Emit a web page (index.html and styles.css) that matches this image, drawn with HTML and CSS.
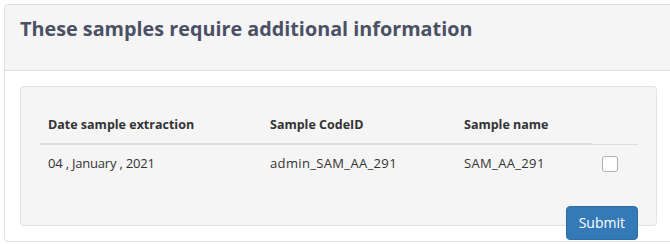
FILE: index.html
```html
<!DOCTYPE html>
<html>
<head>
<meta charset="utf-8">
<link rel="stylesheet" href="styles.css">
</head>
<body>
<div class="panel">
  <div class="panel-heading">
    <h3 class="panel-title">These samples require additional information</h3>
  </div>
  <div class="panel-body">
    <div class="well">
      <table class="table">
        <thead>
          <tr>
            <th class="c1">Date sample extraction</th>
            <th class="c2">Sample CodeID</th>
            <th class="c3">Sample name</th>
          </tr>
        </thead>
        <tbody>
          <tr>
            <td class="date">04 , January , 2021</td>
            <td class="code">admin_SAM_AA_291</td>
            <td class="code">SAM_AA_291</td>
            <td class="c4"><input type="checkbox" class="check"></td>
          </tr>
        </tbody>
      </table>
      <button class="btn">Submit</button>
    </div>
  </div>
</div>
</body>
</html>
```
FILE: styles.css
```css
html, body {
  margin: 0;
  padding: 0;
  background: #fff;
}
body {
  font-family: "Open Sans", "Liberation Sans", sans-serif;
  font-size: 13px;
  line-height: 20px;
  color: #333;
  overflow: hidden;
}
.panel {
  margin: 4px 0 0 4px;
  width: 667px;
  border: 1px solid #ddd;
  border-radius: 4px;
  background: #fff;
}
.panel-heading {
  background: #f5f5f5;
  border-bottom: 1px solid #ddd;
  border-radius: 3px 3px 0 0;
  height: 66px;
  box-sizing: border-box;
  padding: 13px 15px;
}
.panel-title {
  margin: 0;
  font-size: 19.8px;
  line-height: 22px;
  font-weight: 700;
  color: #4b5165;
}
.panel-body {
  padding: 15px;
}
.well {
  background: #f5f5f5;
  border: 1px solid #e3e3e3;
  border-radius: 4px;
  padding: 19px;
  width: 597px;
}
.table {
  width: 598px;
  border-collapse: collapse;
  border-spacing: 0;
  margin-bottom: 25px;
}
.table th {
  text-align: left;
  font-weight: 700;
  font-size: 12.5px;
  padding: 9px 8px 8px;
  border-bottom: 2px solid #ddd;
  vertical-align: bottom;
}
.table td {
  padding: 8px;
  border-top: 1px solid #ddd;
  vertical-align: top;
}
.table td.date {
  letter-spacing: -0.2px;
}
.table td.code {
  letter-spacing: 0.35px;
}
.c1 { width: 206px; }
.c2 { width: 178px; }
.c3 { width: 120px; }
.c4 { width: 30px; }
.check {
  -webkit-appearance: none;
  appearance: none;
  width: 16px;
  height: 16px;
  margin: 3px 0 0 2px;
  border: 1px solid #b3aea8;
  border-radius: 3px;
  background: #fff;
  box-sizing: border-box;
  display: block;
}
.btn {
  float: right;
  font-family: "Open Sans", "Liberation Sans", sans-serif;
  font-size: 14px;
  line-height: 20px;
  padding: 6px 12px;
  color: #fff;
  background: #337ab7;
  border: 1px solid #2e6da4;
  border-radius: 4px;
  margin-right: -1px;
}
```
